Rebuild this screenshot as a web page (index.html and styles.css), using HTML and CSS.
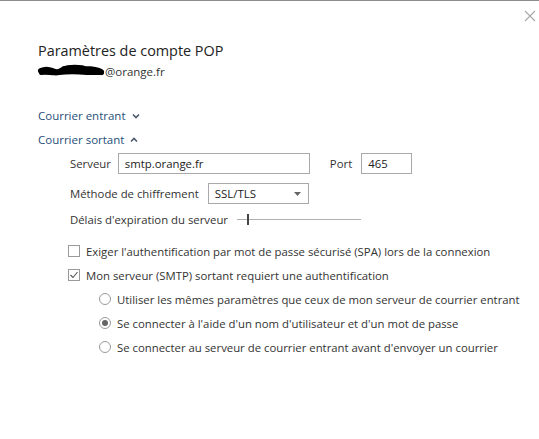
FILE: index.html
```html
<!DOCTYPE html>
<html lang="fr">
<head>
<meta charset="utf-8">
<title>Paramètres de compte POP</title>
<link rel="stylesheet" href="styles.css">
</head>
<body>
<div class="dialog">
  <div class="close" aria-label="Fermer">
    <svg width="12" height="12" viewBox="0 0 12 12"><path d="M1 1 L11 11 M11 1 L1 11" stroke="#a8a8a8" stroke-width="1.1" fill="none"/></svg>
  </div>
  <header class="head">
    <h1 class="title">Paramètres de compte POP</h1>
    <div class="account">
      <svg class="redact" width="68" height="14" viewBox="0 0 68 14"><path d="M4 7 C8 5 14 6 18 8 C22 9 25 6 28 5 C34 4 40 4 48 5 C56 5 61 6 64 8" stroke="#000" stroke-width="6" stroke-linecap="round" fill="none"/><path d="M4 9 C10 8 16 10 22 9 C30 8 40 8 50 9 C56 9 60 9 65 9" stroke="#000" stroke-width="4" stroke-linecap="round" fill="none"/><path d="M26 4 C32 2 40 2 46 3" stroke="#000" stroke-width="3" stroke-linecap="round" fill="none"/></svg><span>@orange.fr</span>
    </div>
  </header>
  <div class="sections">
    <div class="toggle">Courrier entrant
      <svg class="chev" width="8" height="6" viewBox="0 0 8 6"><path d="M1 1.5 L4 4.5 L7 1.5" stroke="#4a5a6a" stroke-width="1.6" fill="none"/></svg>
    </div>
    <div class="toggle">Courrier sortant
      <svg class="chev" width="8" height="6" viewBox="0 0 8 6"><path d="M1 4.5 L4 1.5 L7 4.5" stroke="#4a5a6a" stroke-width="1.6" fill="none"/></svg>
    </div>
    <div class="outgoing">
      <div class="row row-server">
        <span class="label">Serveur</span>
        <div class="field server">smtp.orange.fr</div>
        <span class="label port-label">Port</span>
        <div class="field port">465</div>
      </div>
      <div class="row row-method">
        <span class="label">Méthode de chiffrement</span>
        <div class="field select">SSL/TLS
          <svg class="arrow" width="7" height="4" viewBox="0 0 7 4"><path d="M0 0 L7 0 L3.5 4 Z" fill="#666"/></svg>
        </div>
      </div>
      <div class="row row-timeout">
        <span class="label">Délais d'expiration du serveur</span>
        <div class="slider"><span class="track"></span><span class="thumb"></span></div>
      </div>
      <div class="checks">
        <div class="opt"><span class="box"></span>Exiger l'authentification par mot de passe sécurisé (SPA) lors de la connexion</div>
        <div class="opt"><span class="box checked"><svg width="10" height="10" viewBox="0 0 10 10"><path d="M1.5 5 L4 7.5 L8.5 2" stroke="#555" stroke-width="1.1" fill="none"/></svg></span>Mon serveur (SMTP) sortant requiert une authentification</div>
        <div class="radios">
          <div class="opt"><span class="radio"></span>Utiliser les mêmes paramètres que ceux de mon serveur de courrier entrant</div>
          <div class="opt"><span class="radio on"></span>Se connecter à l'aide d'un nom d'utilisateur et d'un mot de passe</div>
          <div class="opt"><span class="radio"></span>Se connecter au serveur de courrier entrant avant d'envoyer un courrier</div>
        </div>
      </div>
    </div>
  </div>
</div>
</body>
</html>
```
FILE: styles.css
```css
html, body {
  margin: 0;
  padding: 0;
  background: #fff;
}
body {
  font-family: "Open Sans", "Noto Sans", sans-serif;
  color: #262626;
  font-size: 11.35px;
}
.dialog {
  position: relative;
  width: 539px;
  height: 439px;
  box-sizing: border-box;
  border-top: 1px solid #8c8c8c;
  padding: 39px 0 0 38px;
}
.close {
  position: absolute;
  top: 9px;
  right: 3px;
  width: 12px;
  height: 12px;
}
.close svg { display: block; }
.head {
  display: flex;
  flex-direction: column;
}
.title {
  margin: 0;
  font-weight: normal;
  font-size: 14.4px;
  line-height: 22px;
  color: #222;
}
.account {
  display: flex;
  align-items: center;
  height: 18px;
  font-size: 11.5px;
  color: #333;
}
.redact { display: block; margin-left: -1px; }
.sections {
  margin-top: 23px;
  display: flex;
  flex-direction: column;
}
.toggle {
  display: flex;
  align-items: center;
  gap: 6px;
  height: 24px;
  font-size: 11.5px;
  color: #1f4f7a;
}
.chev { display: block; margin-top: 1px; }
.outgoing {
  padding-left: 32px;
  display: flex;
  flex-direction: column;
}
.row {
  display: flex;
  align-items: center;
  height: 24px;
}
.row-server { margin-top: 0; }
.row-method { margin-top: 6px; }
.row-timeout { margin-top: 2px; }
.label { color: #333; }
.field {
  box-sizing: border-box;
  height: 21px;
  border: 1px solid #a9a9a9;
  display: flex;
  align-items: center;
  padding-left: 6px;
  background: #fff;
  color: #222;
}
.server { width: 192px; margin-left: 7px; }
.port-label { margin-left: 20px; }
.port { width: 51px; margin-left: 9px; }
.select {
  width: 101px;
  margin-left: 9px;
  position: relative;
  font-size: 11.5px;
}
.select .arrow {
  position: absolute;
  right: 7px;
  top: 8px;
}
.slider {
  position: relative;
  width: 124px;
  height: 11px;
  margin-left: 9px;
}
.track {
  position: absolute;
  left: 0;
  right: 0;
  top: 5px;
  border-top: 1px solid #b0b0b0;
}
.thumb {
  position: absolute;
  left: 10px;
  top: 0;
  width: 2px;
  height: 11px;
  background: #444;
}
.slider::before {
  content: "";
  position: absolute;
  left: 0;
  width: 11px;
  top: 5px;
  border-top: 1px solid #444;
}
.checks {
  margin-top: 8px;
  display: flex;
  flex-direction: column;
  margin-left: -2px;
}
.radios {
  display: flex;
  flex-direction: column;
  padding-left: 31px;
}
.opt {
  display: flex;
  align-items: center;
  height: 24px;
  color: #333;
}
.box {
  box-sizing: border-box;
  width: 12px;
  height: 12px;
  border: 1px solid #9a9a9a;
  margin-right: 6px;
  display: flex;
  align-items: center;
  justify-content: center;
}
.box svg { display: block; }
.radio {
  box-sizing: border-box;
  width: 12px;
  height: 12px;
  border: 1px solid #9a9a9a;
  border-radius: 50%;
  margin-right: 6px;
  display: flex;
  align-items: center;
  justify-content: center;
}
.radio.on::after {
  content: "";
  width: 6px;
  height: 6px;
  border-radius: 50%;
  background: #666;
}
```
